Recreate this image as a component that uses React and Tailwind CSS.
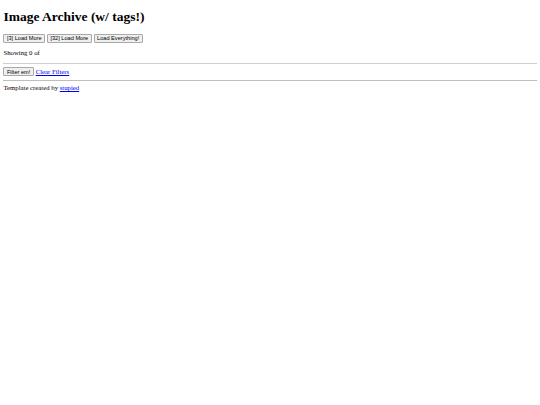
import React from 'react'

const btn =
  "font-['Liberation_Sans',Arial,sans-serif] text-[5.63px] leading-[normal] text-black bg-[#efefef] border border-[#a9a9a9] rounded-[1px] px-[2.5px] py-[0.5px]"

const App = () => {
  return (
    <div className="min-h-[405px] w-[540px] bg-white px-[3.4px] py-px font-['Liberation_Serif','Times_New_Roman',serif] text-[6.75px] text-black antialiased">
      <h1 className="text-[13.5px] font-bold leading-[normal] mt-[8px] mb-[8.5px]">Image Archive (w/ tags!)</h1>
      <div className="flex gap-[1.8px]">
        <button className={btn}>[3] Load More</button>
        <button className={btn}>[32] Load More</button>
        <button className={btn}>Load Everything!</button>
      </div>
      <p className="my-[6.75px] leading-[normal]">Showing 0 of</p>
      <hr className="my-[3.4px] border-t border-[#cfcfcf]" />
      <div className="flex items-center gap-[1.8px]">
        <button className={btn}>Filter em!</button>
        <a href="#" className="text-[#0000ee] underline leading-[normal]">Clear Filters</a>
      </div>
      <hr className="my-[3.4px] border-t border-[#bdbdbd]" />
      <p className="my-[3px] leading-[normal]">
        Template created by <a href="#" className="text-[#0000ee] underline">stupied</a>
      </p>
    </div>
  )
}

export default App
